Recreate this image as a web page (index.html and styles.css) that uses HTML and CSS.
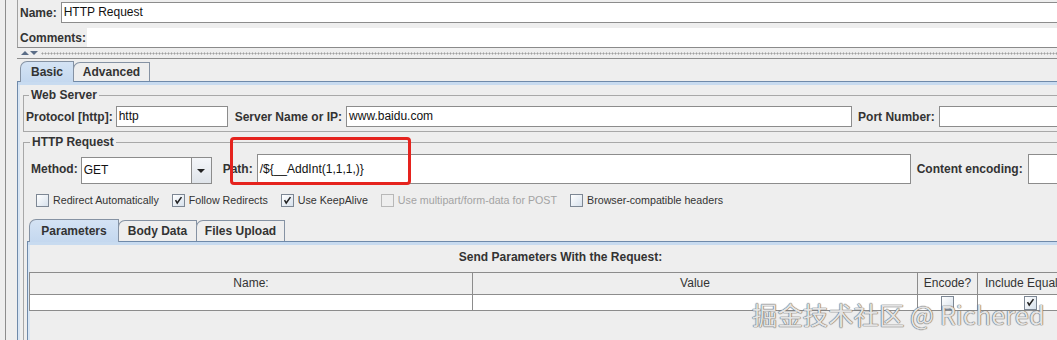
FILE: index.html
```html
<!DOCTYPE html>
<html lang="en">
<head>
  <meta charset="UTF-8" />
  <title>HTTP Request</title>
  <link rel="stylesheet" href="styles.css">
</head>
<body>
  <div class="app">
    <div class="sash"></div>
    <div class="frame">
      <!-- name / comments -->
      <div class="head">
        <div class="row name-row">
          <span class="lbl">Name:</span>
          <div class="field name-field">HTTP Request</div>
        </div>
        <div class="row comments-row">
          <span class="lbl">Comments:</span>
          <div class="comments-field"></div>
        </div>
      </div>

      <div class="split">
        <span class="arrow up"></span>
        <span class="arrow down"></span>
        <span class="dots"></span>
      </div>

      <div class="lower">
        <div class="tabs">
          <div class="tab active tab-basic">Basic</div>
          <div class="tab tab-advanced">Advanced</div>
        </div>
        <div class="tab-body">

          <fieldset class="group web-server">
            <legend>Web Server</legend>
            <div class="row server-row">
              <span class="lbl">Protocol [http]:</span>
              <div class="field protocol">http</div>
              <span class="lbl">Server Name or IP:</span>
              <div class="field host">www.baidu.com</div>
              <span class="lbl">Port Number:</span>
              <div class="field port"></div>
            </div>
          </fieldset>

          <fieldset class="group http-request">
            <legend>HTTP Request</legend>
            <div class="row method-row">
              <span class="lbl method-lbl">Method:</span>
              <div class="combo">
                <span class="combo-value">GET</span>
                <span class="combo-btn"><span class="tri"></span></span>
              </div>
              <span class="lbl path-lbl">Path:</span>
              <div class="field path">/${__AddInt(1,1,1,)}</div>
              <span class="lbl">Content encoding:</span>
              <div class="field encoding"></div>
            </div>

            <div class="checks">
              <label class="check"><span class="box"></span>Redirect Automatically</label>
              <label class="check"><span class="box on"><svg viewBox="0 0 13 13"><path d="M3 6 L5 9.5 L10 2.5" /></svg></span>Follow Redirects</label>
              <label class="check"><span class="box on"><svg viewBox="0 0 13 13"><path d="M3 6 L5 9.5 L10 2.5" /></svg></span>Use KeepAlive</label>
              <label class="check disabled"><span class="box"></span>Use multipart/form-data for POST</label>
              <label class="check"><span class="box"></span>Browser-compatible headers</label>
            </div>

            <div class="sub">
              <div class="tabs sub-tabs">
                <div class="tab active tab-params">Parameters</div>
                <div class="tab tab-data">Body Data</div>
                <div class="tab tab-files">Files Upload</div>
              </div>
              <div class="sub-body">
                <div class="caption">Send Parameters With the Request:</div>
                <div class="grid">
                  <div class="th">Name:</div>
                  <div class="th">Value</div>
                  <div class="th">Encode?</div>
                  <div class="th last">Include Equals?</div>
                  <div class="td"></div>
                  <div class="td"></div>
                  <div class="td center"><span class="box small"></span></div>
                  <div class="td center last"><span class="box small on"><svg viewBox="0 0 13 13"><path d="M3 6 L5 9.5 L10 2.5" /></svg></span></div>
                </div>
              </div>
            </div>
          </fieldset>

        </div>
      </div>
    </div>
  </div>

  <!-- annotation drawn over the screenshot -->
  <div class="mark"></div>
  <div class="watermark">掘金技术社区 @ Richered</div>
</body>
</html>
```

FILE: styles.css
```css
* {
  box-sizing: border-box;
}

html, body {
  margin: 0;
}

body {
  width: 1057px;
  height: 340px;
  overflow: hidden;
  position: relative;
  background: #eeeeee;
  font-family: "Liberation Sans", Arial, sans-serif;
  font-size: 12px;
  color: #333;
}

.app {
  display: flex;
  height: 340px;
  overflow: hidden;
}

.sash {
  flex: none;
  width: 4px;
  margin-right: 1px;
  background-image: radial-gradient(circle, #9c9c9c 45%, transparent 50%);
  background-size: 2px 2px;
}

.frame {
  flex: none;
  width: 1088px;
  border-left: 1px solid #8d8d8d;
  padding-left: 11px;
}

.row {
  display: flex;
  align-items: center;
}

.lbl {
  font-weight: bold;
  white-space: nowrap;
  color: #333;
}

.field {
  height: 21px;
  line-height: 19px;
  border: 1px solid #8c8c8c;
  background: #fff;
  padding: 0 2px;
  color: #111;
  white-space: nowrap;
  overflow: hidden;
}

/* name / comments */
.head {
  border-left: 1px solid #a0a0a0;
  border-bottom: 1px solid #8a8a8a;
  padding: 2px 0 0 2px;
}

.name-row .field {
  flex: 1;
  margin-left: 4px;
}

.comments-row {
  margin-top: 5px;
  height: 19px;
}

.comments-field {
  flex: 1;
  height: 19px;
  margin-left: 1px;
  background: #fff;
}

.split {
  height: 10px;
  display: flex;
  align-items: center;
  padding-left: 4px;
}

.arrow {
  width: 0;
  height: 0;
  border-left: 4px solid transparent;
  border-right: 4px solid transparent;
  margin-right: 1px;
}

.arrow.up {
  border-bottom: 4px solid #5a6c86;
}

.arrow.down {
  border-top: 4px solid #5a6c86;
}

.dots {
  flex: 1;
  height: 3px;
  margin-left: 2px;
  background-image: radial-gradient(circle, #a0a0a0 45%, transparent 50%);
  background-size: 3px 3px;
}

.lower {
  border-top: 1px solid #8e8e8e;
  padding-top: 2px;
}

/* tabs */
.tabs {
  display: flex;
  align-items: flex-end;
  height: 20px;
  padding-left: 3px;
}

.tab {
  height: 19px;
  line-height: 18px;
  text-align: center;
  border: 1px solid #8592a3;
  border-bottom: none;
  border-top-left-radius: 7px;
  margin-right: -1px;
  font-weight: bold;
  background: #eeeeee;
  color: #333;
  white-space: nowrap;
}

.tab.active {
  height: 21px;
  line-height: 20px;
  margin-bottom: -1px;
  position: relative;
  z-index: 1;
  background: linear-gradient(#d4e3f4, #c4d8ef);
}

.tab-basic { width: 54px; }
.tab-advanced { width: 77px; }

.tab-body {
  border-top: 1px solid #6f8aaa;
  border-left: 1px solid #6f8aaa;
  box-shadow: inset 0 3px 0 #c8dbf0, inset 2px 0 0 #d9e6f4;
  padding: 6px 0 0 5px;
  height: 259px;
  overflow: hidden;
}

/* titled groups */
.group {
  margin: 0;
  min-width: 0;
  border: 1px solid #a8a8a8;
  padding: 4px 0 4px 2px;
}

.group legend {
  padding: 0 2px;
  margin-left: 3px;
  font-weight: bold;
  line-height: 14px;
  color: #333;
}

.http-request {
  margin-top: 3px;
  padding: 5px 0 0 3px;
}

.server-row .field.protocol {
  width: 112px;
  margin: 0 7px 0 3px;
}

.server-row .field.host {
  width: 506px;
  margin: 0 6px 0 4px;
}

.server-row .field.port {
  flex: 1;
  margin-left: 4px;
}

.method-row {
  height: 30px;
}

.method-lbl {
  margin-left: 4px;
}

.combo {
  display: flex;
  width: 131px;
  height: 27px;
  margin: 3px 11px 0 3px;
  border: 1px solid #8c8c8c;
  background: #fff;
}

.combo-value {
  flex: 1;
  padding: 0 2px;
  line-height: 25px;
  color: #111;
}

.combo-btn {
  width: 20px;
  display: flex;
  align-items: center;
  justify-content: center;
  border-left: 1px solid #8c8c8c;
  background: linear-gradient(#f4f6f9, #dfe4ea);
}

.tri {
  width: 0;
  height: 0;
  border-left: 4px solid transparent;
  border-right: 4px solid transparent;
  border-top: 4px solid #222;
}

.field.path {
  width: 654px;
  height: 30px;
  line-height: 28px;
  margin: 0 6px 0 4px;
}

.field.encoding {
  flex: 1;
  height: 30px;
  margin-left: 5px;
}

/* check boxes */
.checks {
  display: flex;
  align-items: center;
  height: 14px;
  margin-top: 9px;
  padding-left: 9px;
  font-size: 10.7px;
  color: #333;
}

.check {
  display: flex;
  align-items: center;
  margin-right: 13px;
  white-space: nowrap;
}

.check.disabled {
  color: #a3a3a3;
}

.box {
  flex: none;
  width: 13px;
  height: 13px;
  margin-right: 4px;
  border: 1px solid #7d8794;
  background: linear-gradient(135deg, #ffffff, #d7e1ec);
  display: inline-flex;
}

.check.disabled .box {
  border-color: #b8b8b8;
  background: #eeeeee;
}

.box svg {
  width: 11px;
  height: 11px;
}

.box path {
  fill: none;
  stroke: #222;
  stroke-width: 1.8;
}

/* parameters sub tabs */
.sub {
  margin-top: 12px;
}

.sub-tabs {
  height: 22px;
  padding-left: 2px;
}

.sub-tabs .tab {
  height: 21px;
  line-height: 20px;
}

.sub-tabs .tab.active {
  height: 23px;
  line-height: 22px;
}

.tab-params { width: 90px; }
.tab-data { width: 79px; }
.tab-files { width: 89px; }

.sub-body {
  border-top: 1px solid #6f8aaa;
  border-left: 1px solid #6f8aaa;
  box-shadow: inset 0 3px 0 #c8dbf0, inset 2px 0 0 #d9e6f4;
  padding: 8px 0 0 1px;
  height: 100px;
}

.caption {
  text-align: center;
  font-weight: bold;
  line-height: 14px;
  margin-bottom: 8px;
  color: #333;
}

.grid {
  display: grid;
  grid-template-columns: 443px 445px 60px 1fr;
  grid-template-rows: 22px 16px;
  border-top: 1px solid #8c8c8c;
  border-left: 1px solid #8c8c8c;
}

.th {
  border-right: 1px solid #8c8c8c;
  border-bottom: 1px solid #8c8c8c;
  text-align: center;
  line-height: 21px;
  white-space: nowrap;
  overflow: hidden;
  color: #333;
}

.th.last {
  text-align: left;
  padding-left: 7px;
}

.td {
  background: #fff;
  border-right: 1px solid #8c8c8c;
  border-bottom: 1px solid #8c8c8c;
}

.td.center {
  display: flex;
  justify-content: center;
}

.td.last {
  justify-content: flex-start;
  padding-left: 46px;
}

.box.small {
  width: 13px;
  height: 14px;
  margin: 1px 0 0 0;
}

/* overlays */
.mark {
  position: absolute;
  left: 230px;
  top: 137px;
  width: 181px;
  height: 48px;
  border: 3px solid #e5231e;
  border-radius: 4px;
}

.watermark {
  position: absolute;
  left: 752px;
  top: 296px;
  font-family: "Noto Sans CJK SC", "Liberation Sans", sans-serif;
  font-size: 25.4px;
  line-height: 36px;
  white-space: nowrap;
  color: rgba(250, 250, 250, 0.85);
  text-shadow: 0 0 1px #6a6a6a, 0 0 1px #6a6a6a, 0 0 1px #6a6a6a;
}
```
